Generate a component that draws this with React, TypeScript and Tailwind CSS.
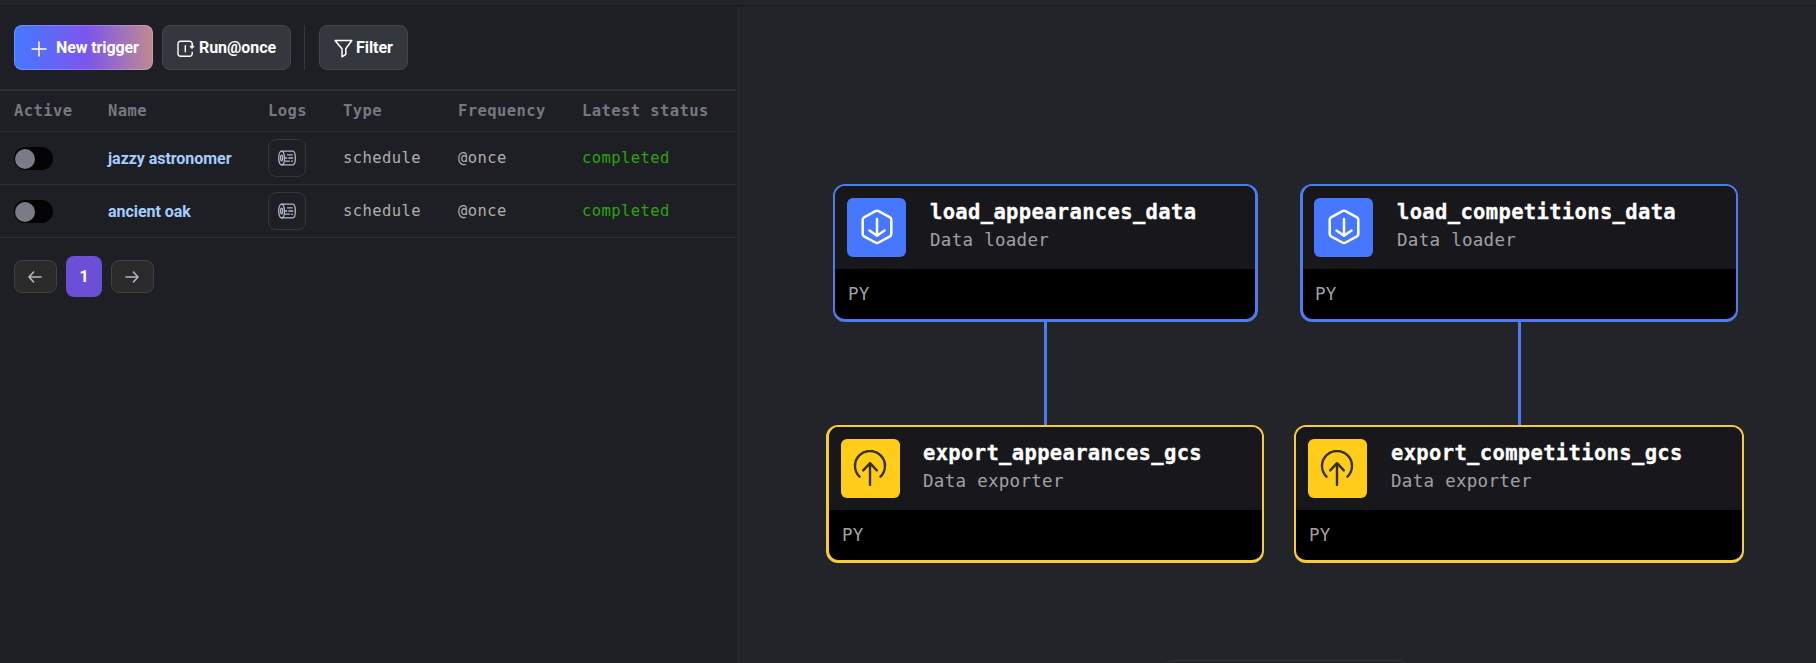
import React from "react";

const mono = "font-['DejaVu_Sans_Mono',monospace]";

function RunIcon() {
  return (
    <svg width="18" height="18" viewBox="0 0 18 18" fill="none" stroke="#fff" strokeWidth="1.4" strokeLinecap="round" strokeLinejoin="round">
      <path d="M15.2 4.5V3.6a2.4 2.4 0 0 0-2.4-2.4H3.4A2.4 2.4 0 0 0 1 3.6v10.2a2.4 2.4 0 0 0 2.4 2.4h9.4a2.4 2.4 0 0 0 2.4-2.4v-1.6" />
      <path d="M15.2 4.5v3M8.3 5.8v6" />
      <path d="M13.4 6.3h3.6l-1.800 2z" fill="#fff" strokeWidth="1" />
    </svg>
  );
}

function FilterIcon() {
  return (
    <svg width="19" height="19" viewBox="0 0 19 19" fill="none" stroke="#fff" strokeWidth="1.5" strokeLinejoin="round">
      <path d="M1 1.5h16.8l-6 8.2v5.6L8 17.8V9.7z" />
    </svg>
  );
}

function LogsIcon() {
  return (
    <svg width="18" height="16" viewBox="0 0 18 16" fill="none" stroke="#aeb8cc" strokeWidth="1.3" strokeLinecap="round">
      <ellipse cx="3.6" cy="8" rx="2.9" ry="6.9" />
      <ellipse cx="3.6" cy="8" rx="1" ry="2.8" />
      <path d="M3.6 1.1h11.2c1.5 0 2.5 3 2.5 6.900s-1 6.900-2.500 6.900H3.600M9.500 4.800h4.800M7.200 8h1.600M10.800 8h4M7.400 11.200h4M13.400 11.200h1" />
    </svg>
  );
}

function ArrowIcon({ flip }: { flip?: boolean }) {
  return (
    <svg width="14" height="12" viewBox="0 0 14 12" className={flip ? "mr-[2px] rotate-180" : "mr-[2px]"} fill="none" stroke="#b4b8c0" strokeWidth="1.6" strokeLinecap="round" strokeLinejoin="round">
      <path d="M13 6H1M5.6 1L1 6l4.6 5" />
    </svg>
  );
}

function LoaderIcon() {
  return (
    <svg width="32" height="36" viewBox="0 0 32 36" className="mb-px" fill="none" stroke="#fff" strokeWidth="2.5" strokeLinecap="round" strokeLinejoin="round">
      <path d="M14.4 2.2Q16 1.4 17.6 2.2L29 8.3Q30.3 9 30.3 10.6V25Q30.3 26.6 29 27.3L17.6 33.5Q16 34.3 14.4 33.5L3 27.3Q1.7 26.6 1.7 25V10.6Q1.7 9 3 8.3Z" />
      <path d="M16 10v16.5M8.5 21.5l7.5 5.2 7.5-5.2" />
    </svg>
  );
}

function ExporterIcon() {
  return (
    <svg width="34" height="36" viewBox="0 0 34 36" className="mr-px mb-px" fill="none" stroke="#37300f" strokeWidth="2.4" strokeLinecap="round" strokeLinejoin="round">
      <path d="M6.5 26.7A15 15 0 1 1 27.5 26.7" />
      <path d="M17 35V13.5M10.2 20.3L17 13.2l6.8 7.1" />
    </svg>
  );
}

const rows = ["jazzy astronomer", "ancient oak"];
const grid = "grid grid-cols-[94px_160px_75px_115px_124px_1fr] items-center pl-[14px]";

type BlockProps = { place: string; name: string; kind: "loader" | "exporter"; pad: string; gap: string };

function Block({ place, name, kind, pad, gap }: BlockProps) {
  const loader = kind === "loader";
  return (
    <div className={`absolute h-[138px] overflow-hidden rounded-[12px] border-2 border-b-3 bg-black ${loader ? "border-[#4f7bf0]" : "border-[#f8cb3c]"} ${place}`}>
      <div className={`flex h-[83px] bg-[#18181c] pt-[12px] ${pad}`}>
        <div className={`flex size-[59px] items-center justify-center rounded-[6px] ${loader ? "bg-[#4877ff]" : "bg-[#ffcc19]"}`}>
          {loader ? <LoaderIcon /> : <ExporterIcon />}
        </div>
        <div className={`flex flex-col whitespace-nowrap ${gap}`}>
          <span className="h-[28px] text-[20.5px] leading-[29px] font-bold tracking-[0.34px] text-white [-webkit-text-stroke:0.3px_#fff]">{name}</span>
          <span className="h-[28px] text-[17.5px] leading-[28px] tracking-[0.29px] text-[#a1a1a4]">{loader ? "Data loader" : "Data exporter"}</span>
        </div>
      </div>
      <div className={`flex h-[50px] items-center text-[17.5px] tracking-[0.29px] text-[#a1a1a4] ${pad}`}>
        <span className="ml-px">PY</span>
      </div>
    </div>
  );
}

export default function App() {
  return (
    <div className="flex h-[663px] w-[1816px] flex-col overflow-hidden bg-[#232429] font-[Roboto,sans-serif] text-[16px]">
      <div className="h-[6px] shrink-0 border-b border-[#1c1d21]" />
      <div className="flex min-h-0 flex-1">
        <section className="w-[737px] shrink-0 border-r border-[#1c1d21] bg-[#1e1f24]">
          <div className="flex h-[83px] items-start pt-[19px] pl-[14px] font-bold text-white">
            <button className="flex h-[45px] w-[139px] items-center rounded-[8px] border border-white/20 bg-[linear-gradient(90deg,#4877ff_3%,#7d55ec_53%,#bb8794_97%)] bg-origin-border pl-[16px] whitespace-nowrap">
              <svg width="16" height="16" viewBox="0 0 16 16" className="mt-[2px]" stroke="#fff" strokeWidth="1.5" strokeLinecap="round">
                <path d="M8 1v14M1 8h14" />
              </svg>
              <span className="ml-[9px] tracking-[-0.1px]">New trigger</span>
            </button>
            <button className="ml-[9px] flex h-[45px] w-[129px] items-center rounded-[8px] border border-[#44464d] bg-[#35373e] pl-[14px]">
              <span className="mt-[2px]"><RunIcon /></span>
              <span className="ml-[4px] tracking-[-0.05px]">Run@once</span>
            </button>
            <div className="mr-[14px] ml-[13px] h-[45px] w-px bg-[#35373c]" />
            <button className="flex h-[45px] w-[89px] items-center rounded-[8px] border border-[#44464d] bg-[#35373e] pl-[14px]">
              <span className="mt-px"><FilterIcon /></span>
              <span className="ml-[3px] tracking-[-0.05px]">Filter</span>
            </button>
          </div>
          <div className={`h-[43px] border-t-2 border-b border-[#2f3035] pt-[2px] ${grid} ${mono} text-[15.5px] font-bold tracking-[0.42px] text-[#767782]`}>
            <span>Active</span>
            <span>Name</span>
            <span>Logs</span>
            <span>Type</span>
            <span>Frequency</span>
            <span>Latest status</span>
          </div>
          {rows.map((name) => (
            <div key={name} className={`h-[53px] border-b border-[#2f3035] ${grid} ${mono} text-[15.5px] tracking-[0.42px] text-[#aeaeb0]`}>
              <div className="mt-px flex h-[23px] w-[39px] items-center rounded-full bg-[#040405] pl-px">
                <div className="size-[20px] rounded-full bg-[#7b7b88]" />
              </div>
              <span className="mt-[2px] font-[Roboto,sans-serif] text-[16px] font-bold tracking-[-0.05px] text-[#a5cdff]">{name}</span>
              <div className="flex size-[38px] items-center justify-center rounded-[8px] border border-[#35363b]">
                <LogsIcon />
              </div>
              <span className="mt-px">schedule</span>
              <span className="mt-px">@once</span>
              <span className="mt-px text-[#2ba40f]">completed</span>
            </div>
          ))}
          <div className="mt-[18px] flex items-center gap-[9px] pl-[14px]">
            <button className="flex h-[33px] w-[43px] items-center justify-center rounded-[8px] border border-[#404041] bg-[#2a2a2b]">
              <ArrowIcon />
            </button>
            <button className="flex h-[41px] w-[36px] items-center justify-center rounded-[8px] bg-[#6b50d7] font-bold text-white">1</button>
            <button className="flex h-[33px] w-[43px] items-center justify-center rounded-[8px] border border-[#404041] bg-[#2a2a2b]">
              <ArrowIcon flip />
            </button>
          </div>
        </section>
        <main className={`relative flex-1 overflow-hidden bg-[#232429] ${mono}`}>
          <div className="absolute top-[316px] left-[307px] h-[104px] w-[3px] bg-[#4f7bf0]" />
          <div className="absolute top-[316px] left-[781px] h-[104px] w-[3px] bg-[#4f7bf0]" />
          <Block place="left-[96px] top-[178px] w-[425px] border-r-3" pad="pl-[12px]" gap="ml-[24px]" name="load_appearances_data" kind="loader" />
          <Block place="left-[563px] top-[178px] w-[438px] border-l-3" pad="pl-[11px]" gap="ml-[24px]" name="load_competitions_data" kind="loader" />
          <Block place="left-[89px] top-[419px] w-[438px] border-l-3" pad="pl-[12px]" gap="ml-[23px]" name="export_appearances_gcs" kind="exporter" />
          <Block place="left-[557px] top-[419px] w-[450px]" pad="pl-[12px]" gap="ml-[24px]" name="export_competitions_gcs" kind="exporter" />
          <div className="absolute top-[654px] left-[425px] h-[40px] w-[248px] rounded-[12px] border border-[#2f3036]" />
        </main>
      </div>
    </div>
  );
}
